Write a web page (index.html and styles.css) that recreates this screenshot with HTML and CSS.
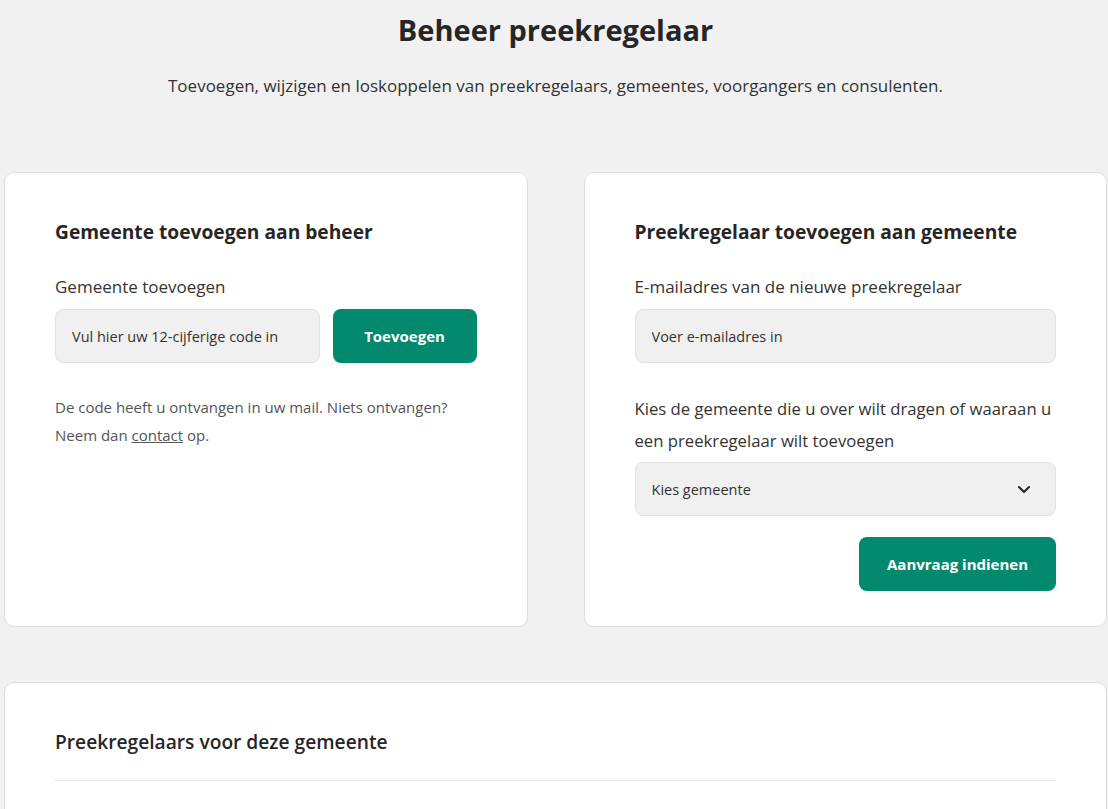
FILE: index.html
```html
<!DOCTYPE html>
<html lang="nl">
<head>
  <meta charset="UTF-8">
  <title>Beheer preekregelaar</title>
  <link rel="stylesheet" href="styles.css">
</head>
<body>
  <main class="page">
    <header class="intro">
      <h1>Beheer preekregelaar</h1>
      <p>Toevoegen, wijzigen en loskoppelen van preekregelaars, gemeentes, voorgangers en consulenten.</p>
    </header>

    <div class="cards-row">
      <section class="card">
        <h2>Gemeente toevoegen aan beheer</h2>
        <label class="field-label" for="code">Gemeente toevoegen</label>
        <div class="inline-form">
          <input class="input" id="code" type="text" placeholder="Vul hier uw 12-cijferige code in">
          <button class="btn">Toevoegen</button>
        </div>
        <p class="help">De code heeft u ontvangen in uw mail. Niets ontvangen?<br>Neem dan <a href="#">contact</a> op.</p>
      </section>

      <section class="card">
        <h2>Preekregelaar toevoegen aan gemeente</h2>
        <label class="field-label" for="email">E-mailadres van de nieuwe preekregelaar</label>
        <input class="input" id="email" type="text" placeholder="Voer e-mailadres in">
        <label class="field-label field-label-long" for="gemeente">Kies de gemeente die u over wilt dragen of waaraan u een preekregelaar wilt toevoegen</label>
        <div class="select">
          <span>Kies gemeente</span>
          <svg width="14" height="9" viewBox="0 0 14 9"><path d="M2 2l5 5 5-5" fill="none" stroke="#222" stroke-width="2" stroke-linecap="round" stroke-linejoin="round"/></svg>
        </div>
        <div class="actions">
          <button class="btn btn-wide">Aanvraag indienen</button>
        </div>
      </section>
    </div>

    <section class="card card-wide">
      <h2 class="list-title">Preekregelaars voor deze gemeente</h2>
      <hr class="divider">
    </section>
  </main>
</body>
</html>
```

FILE: styles.css
```css
body {
  margin: 0;
  background-color: #f1f1f1;
  color: #222;
  font-family: "Open Sans", "Liberation Sans", sans-serif;
}
.page {
  width: 1103px;
  margin-left: 4px;
}
.intro {
  text-align: center;
  padding-top: 12px;
  margin-bottom: 74px;
}
.intro h1 {
  margin: 0;
  font-size: 29px;
  line-height: 36px;
  font-weight: 700;
  color: #262626;
}
.intro p {
  margin: 26px 0 0;
  font-size: 17px;
  line-height: 24px;
  color: #333;
}
.cards-row {
  display: grid;
  grid-template-columns: 1fr 1fr;
  gap: 56px;
}
.card {
  background: #fff;
  border: 1px solid #dedede;
  border-radius: 10px;
  padding: 45px 50px 35px;
}
.card h2 {
  margin: 0 0 29px;
  font-size: 19.2px;
  line-height: 28px;
  font-weight: 700;
  color: #262626;
}
.field-label {
  display: block;
  font-size: 17px;
  line-height: 24px;
  color: #333;
  margin-bottom: 10px;
}
.field-label-long {
  font-size: 16.7px;
  line-height: 32px;
  margin-top: 30px;
  margin-bottom: 5px;
}
.inline-form {
  display: flex;
  gap: 13px;
}
.input {
  box-sizing: border-box;
  width: 100%;
  height: 54px;
  padding: 0 16px;
  background: #f0f0f0;
  border: 1px solid #e2e2e2;
  border-radius: 8px;
  font-family: inherit;
  font-size: 14.5px;
  color: #333;
}
.input::placeholder {
  color: #333;
}
.inline-form .input {
  flex: 1;
}
.btn {
  height: 54px;
  padding: 0 30px;
  border: none;
  border-radius: 8px;
  background-color: #03896e;
  color: #fff;
  font-family: inherit;
  font-size: 15px;
  font-weight: 700;
  cursor: pointer;
}
.inline-form .btn {
  width: 144px;
  padding: 0;
}
.btn-wide {
  width: 197px;
  padding: 0;
}
.help {
  margin: 30px 0 0;
  font-size: 15px;
  line-height: 28px;
  color: #555;
}
.help a {
  color: #555;
}
.select {
  box-sizing: border-box;
  height: 54px;
  display: flex;
  align-items: center;
  justify-content: space-between;
  padding: 0 24px 0 16px;
  background: #f0f0f0;
  border: 1px solid #e2e2e2;
  border-radius: 8px;
  font-size: 14.5px;
  color: #333;
}
.actions {
  display: flex;
  justify-content: flex-end;
  margin-top: 21px;
}
.card-wide {
  margin-top: 55px;
  padding-bottom: 40px;
}
.card-wide .list-title {
  font-weight: 600;
  margin-bottom: 24px;
}
.divider {
  border: none;
  border-top: 1px solid #e6e6e6;
  margin: 0;
}
```
